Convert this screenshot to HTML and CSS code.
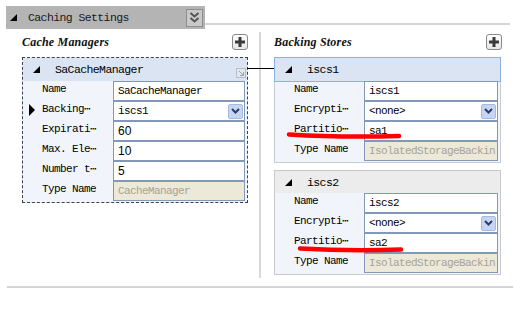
FILE: index.html
```html
<!DOCTYPE html>
<html lang="en">
<head>
    <meta charset="UTF-8">
    <title>Caching Settings</title>
    <link rel="stylesheet" href="styles.css">
</head>
<body>
<div class="page">
    <div class="topbar">
        <div class="titlebar">
            <svg class="tri" width="7" height="7"><polygon points="7,0 7,7 0,7" fill="#000"/></svg>
            <span class="title">Caching Settings</span>
            <span class="collapse"><svg width="11" height="12" viewBox="0 0 11 12"><path d="M1.5 1 L5.5 4.5 L9.5 1 M1.5 6 L5.5 9.5 L9.5 6" stroke="#555" stroke-width="2" fill="none"/></svg></span>
        </div>
        <div class="topline"></div>
    </div>

    <div class="panels">
        <section class="panel-left">
            <div class="panel-head">
                <h2>Cache Managers</h2>
                <span class="add"><svg width="10" height="10"><path d="M5 0 V10 M0 5 H10" stroke="#3a3a3a" stroke-width="3"/></svg></span>
            </div>
            <div class="card manager">
                <div class="card-head">
                    <svg class="tri" width="7" height="7"><polygon points="7,0 7,7 0,7" fill="#000"/></svg>
                    <span>SaCacheManager</span>
                    <svg class="resize" width="10" height="10"><rect x="0.5" y="0.5" width="9" height="9" fill="#e4e8ee" stroke="#b7bfca"/><path d="M3 3 L7.5 7.5 M7.5 4 V7.5 H4" stroke="#9aa3ae" fill="none"/></svg>
                </div>
                <div class="card-body">
                    <div class="row"><span class="lbl">Name</span><span class="val">SaCacheManager</span></div>
                    <div class="row current"><span class="lbl">Backing⋯</span><span class="val"><span class="txt">iscs1</span><span class="drop"><svg width="9" height="6"><path d="M1 1 L4.5 4.5 L8 1" stroke="#2c3e66" stroke-width="2" fill="none"/></svg></span></span></div>
                    <div class="row"><span class="lbl">Expirati⋯</span><span class="val num">60</span></div>
                    <div class="row"><span class="lbl">Max. Ele⋯</span><span class="val num">10</span></div>
                    <div class="row"><span class="lbl">Number t⋯</span><span class="val num">5</span></div>
                    <div class="row"><span class="lbl">Type Name</span><span class="val off">CacheManager</span></div>
                </div>
            </div>
        </section>

        <section class="panel-right">
            <div class="panel-head">
                <h2>Backing Stores</h2>
                <span class="add"><svg width="10" height="10"><path d="M5 0 V10 M0 5 H10" stroke="#3a3a3a" stroke-width="3"/></svg></span>
            </div>
            <div class="card store active">
                <div class="card-head">
                    <svg class="tri" width="7" height="7"><polygon points="7,0 7,7 0,7" fill="#000"/></svg>
                    <span>iscs1</span>
                </div>
                <div class="card-body">
                    <div class="row"><span class="lbl">Name</span><span class="val">iscs1</span></div>
                    <div class="row"><span class="lbl">Encrypti⋯</span><span class="val"><span class="txt">&lt;none&gt;</span><span class="drop"><svg width="9" height="6"><path d="M1 1 L4.5 4.5 L8 1" stroke="#2c3e66" stroke-width="2" fill="none"/></svg></span></span></div>
                    <div class="row"><span class="lbl">Partitio⋯</span><span class="val">sa1</span></div>
                    <div class="row"><span class="lbl">Type Name</span><span class="val off">IsolatedStorageBackin</span></div>
                </div>
            </div>
            <div class="card store plain">
                <div class="card-head">
                    <svg class="tri" width="7" height="7"><polygon points="7,0 7,7 0,7" fill="#000"/></svg>
                    <span>iscs2</span>
                </div>
                <div class="card-body">
                    <div class="row"><span class="lbl">Name</span><span class="val">iscs2</span></div>
                    <div class="row"><span class="lbl">Encrypti⋯</span><span class="val"><span class="txt">&lt;none&gt;</span><span class="drop"><svg width="9" height="6"><path d="M1 1 L4.5 4.5 L8 1" stroke="#2c3e66" stroke-width="2" fill="none"/></svg></span></span></div>
                    <div class="row"><span class="lbl">Partitio⋯</span><span class="val">sa2</span></div>
                    <div class="row"><span class="lbl">Type Name</span><span class="val off">IsolatedStorageBackin</span></div>
                </div>
            </div>
        </section>
    </div>

    <!-- red marker strokes drawn over the form -->
    <svg class="marks" width="529" height="314">
        <path d="M289 134.5 Q 340 137.5 399 136" stroke="#f00" stroke-width="4.5" stroke-linecap="round" fill="none"/>
        <path d="M300 248.5 Q 350 251.5 401 249.5" stroke="#f00" stroke-width="4.5" stroke-linecap="round" fill="none"/>
    </svg>
</div>
</body>
</html>
```

FILE: styles.css
```css
body {margin: 0; background: #fff; color: #000; font-family: "Liberation Mono", monospace; font-size: 11px; letter-spacing: -0.6px;}
.page {position: relative; width: 529px; height: 314px; box-sizing: border-box; padding: 6px 0 0 6px;}

.topbar {display: flex; width: 504px; height: 23px;}
.titlebar {width: 199px; display: flex; align-items: center; padding-left: 4px; box-sizing: border-box; background: #b4b4b4; color: #1a1a1a;}
.titlebar .tri {margin-right: 11px;}
.titlebar .title {flex: 1; font-size: 11.5px;}
.collapse {width: 17px; height: 18px; margin-right: 2px; display: flex; align-items: center; justify-content: center; border: 1px solid #8e8e8e; background: #c9c9c9; box-sizing: border-box;}
.topline {flex: 1; margin-bottom: 4px; border-bottom: 2px solid #d4d4d4;}

.panels {display: flex; width: 506px; height: 259px; margin-left: 1px; box-sizing: border-box; border-bottom: 2px solid #d4d4d4;}
.panel-left {width: 254px; box-sizing: border-box; margin: 3px 0 8px; padding: 0 11px 0 15px; border-right: 2px solid #d8d8d8;}
.panel-right {flex: 1; padding: 3px 11px 0 13px;}

.panel-head {height: 25px; box-sizing: border-box; padding-bottom: 5px; display: flex; align-items: center; justify-content: space-between;}
.panel-head h2 {margin: 0; font: bold italic 12px "Liberation Serif", serif; letter-spacing: 0.2px; color: #111;}
.add {width: 16px; height: 16px; box-sizing: border-box; display: flex; align-items: center; justify-content: center; border: 1px solid #8a8a8a; border-radius: 3px; background: linear-gradient(#fff, #e6e6e6);}

.card {position: relative; border: 1px solid #c6ccd6; background: #f1f5fb;}
.card-head {height: 23px; display: flex; align-items: center; padding-left: 10px; background: #dae4f3;}
.card-head .tri {margin-right: 15px;}
.card-head span {font-size: 11.5px;}
.card-body {padding-bottom: 1px;}

.manager {border: 1px dashed #3a4250;}
.manager::after {content: ""; position: absolute; left: 100%; top: 10px; width: 27px; border-top: 1px solid #000;}
.resize {margin-left: auto; margin-right: 1px; align-self: flex-end; margin-bottom: 3px;}
.store {width: 227px; box-sizing: border-box;}
.active .card-head {box-shadow: 0 0 0 1px #8cb1e6;}
.plain {margin-top: 7px; border-color: #cacaca;}
.plain .card-head {background: #ececec; height: 22px;}

.row {display: flex; height: 20px;}
.lbl {position: relative; width: 90px; box-sizing: border-box; padding-left: 19px; line-height: 16px; white-space: nowrap;}
.store .lbl {width: 89px;}
.current .lbl::before {content: ""; position: absolute; left: 6px; top: 3px; border-left: 6px solid #000; border-top: 6px solid transparent; border-bottom: 6px solid transparent;}
.val {flex: 1; margin-right: 2px; display: flex; align-items: center; padding-left: 4px; box-sizing: border-box; border: 1px solid #8198b8; background: #fff; white-space: nowrap; overflow: hidden;}
.val .txt {flex: 1;}
.num {font-family: "Liberation Sans", sans-serif; font-size: 12px; letter-spacing: 0;}
.off {background: #ece9d8; color: #a6a296;}
.drop {width: 15px; height: 15px; margin-right: 1px; display: flex; align-items: center; justify-content: center; box-sizing: border-box; border: 1px solid #a7b9e0; border-radius: 2px; background: #c6d5f4;}

.marks {position: absolute; left: 0; top: 0; pointer-events: none;}
```
